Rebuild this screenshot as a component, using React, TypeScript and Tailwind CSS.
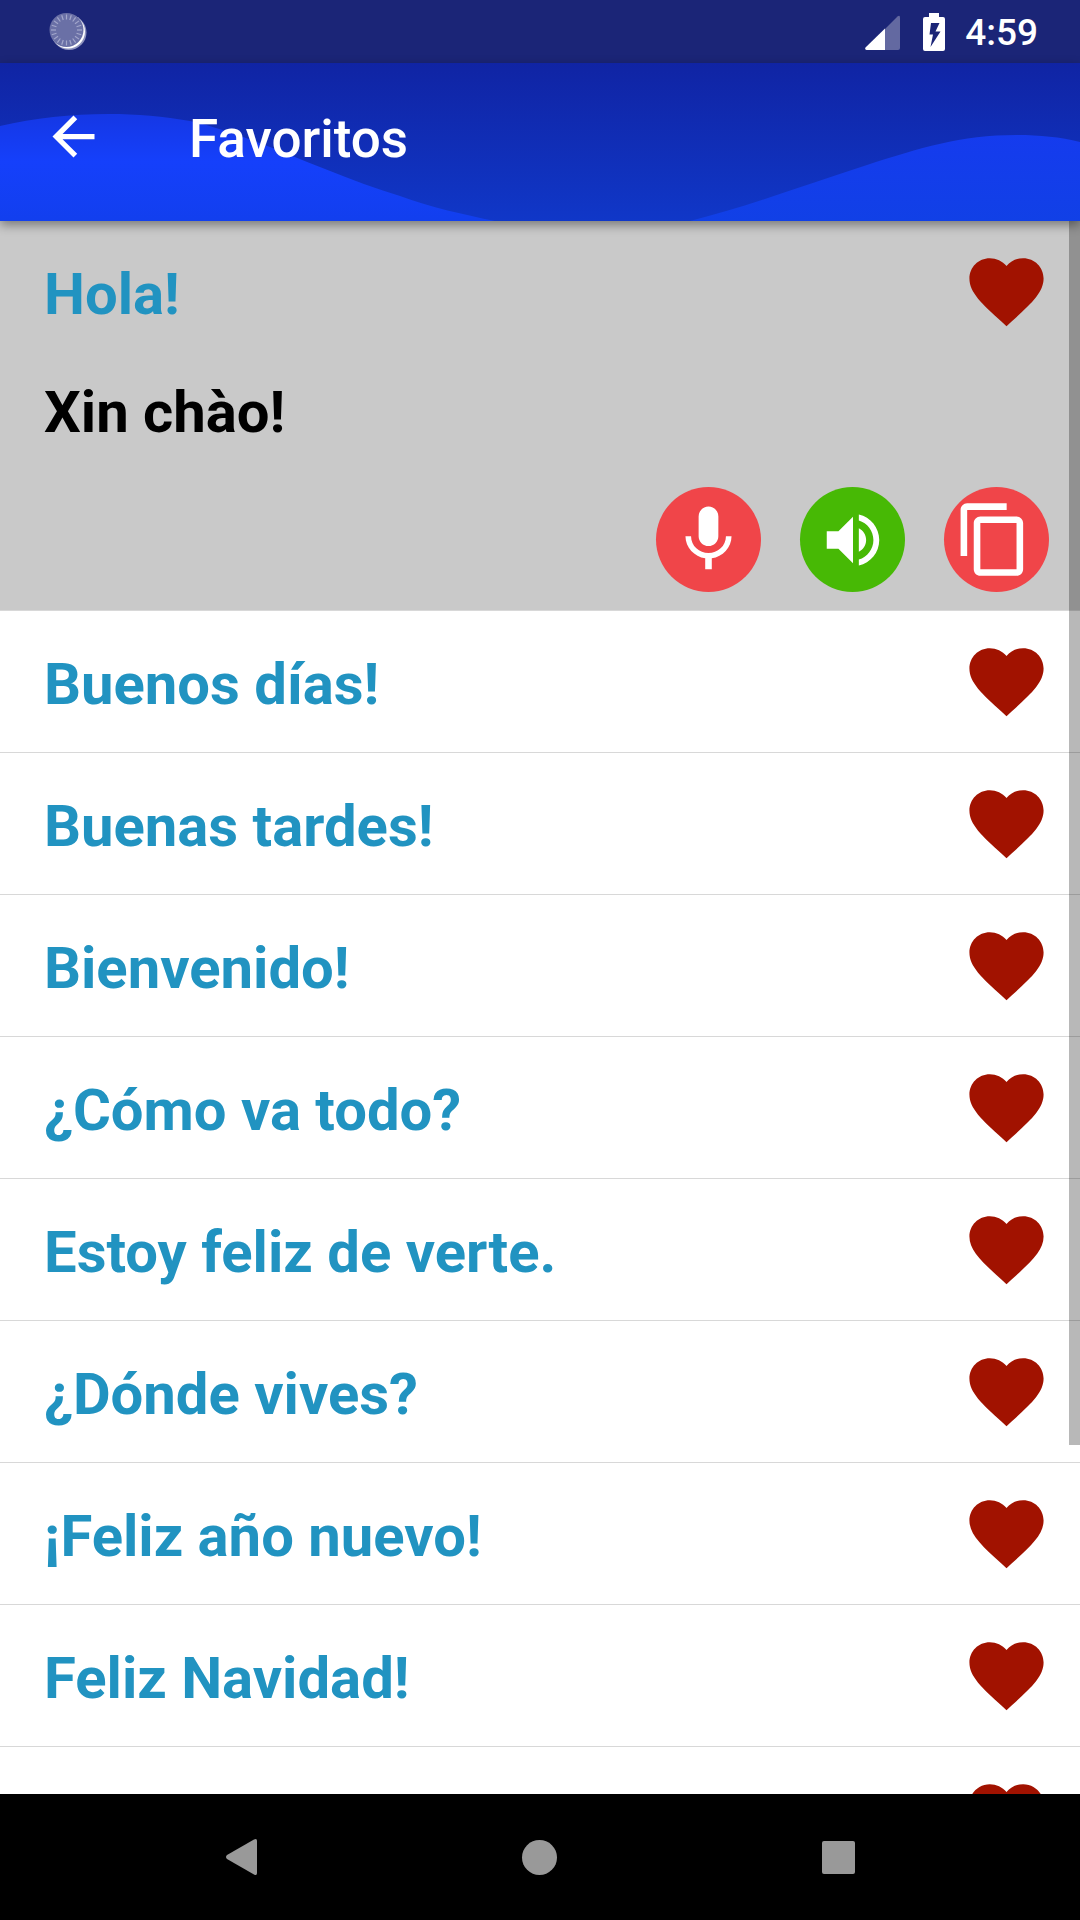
import React, { useState } from "react";

const phrases = [
  { id: 1, text: "Hola!", translation: "Xin chào!" },
  { id: 2, text: "Buenos días!", translation: "" },
  { id: 3, text: "Buenas tardes!", translation: "" },
  { id: 4, text: "Bienvenido!", translation: "" },
  { id: 5, text: "¿Cómo va todo?", translation: "" },
  { id: 6, text: "Estoy feliz de verte.", translation: "" },
  { id: 7, text: "¿Dónde vives?", translation: "" },
  { id: 8, text: "¡Feliz año nuevo!", translation: "" },
  { id: 9, text: "Feliz Navidad!", translation: "" },
  { id: 10, text: "", translation: "" },
];

const ticks = Array.from({ length: 20 }, (_, i) => i * 18);

function StatusBar() {
  return (
    <div className="flex h-[63px] shrink-0 items-center justify-between bg-[#1b2577] pl-[49px] pr-[42px]">
      <svg viewBox="0 0 38 38" className="size-[38px]">
        <circle cx="20" cy="19.500" r="17.500" fill="#8d92bd" />
        <circle cx="19" cy="18.500" r="17" fill="#fff" />
        <circle cx="17.500" cy="17" r="17" fill="#6a70a6" />
        {ticks.map((a) => (
          <path
            key={a}
            d="M17.500 1.500v5"
            stroke="#a3a7cb"
            strokeWidth="1.2"
            transform={`rotate(${a} 17.500 17)`}
          />
        ))}
      </svg>
      <div className="flex items-center">
        <svg viewBox="0 0 35 38" className="mr-[23px] h-[38px] w-[35px]">
          <path d="M20 16L32.500 3.500Q35 1.500 35 4.500V35Q35 37 33 37H20z" fill="#6369a1" />
          <path d="M20 15.500V37H1.500Q-.5 36.500 .5 34.500z" fill="#fff" />
        </svg>
        <svg viewBox="0 0 22 38" className="mr-[20px] h-[38px] w-[22px]">
          <path
            fill="#fff"
            fillRule="evenodd"
            d="M6 0h10v4h4q2 0 2 2v30q0 2-2 2H2q-2 0-2-2V6q0-2 2-2h4zM8 10L6.500 21.500H10L7.500 34L17.500 18.500H12.500L16.500 10z"
          />
        </svg>
        <span className="pt-[2px] text-[37px] leading-[44px] font-medium text-white">4:59</span>
      </div>
    </div>
  );
}

function Header() {
  return (
    <header className="relative z-10 h-[158px] shrink-0 bg-linear-to-b from-[#1024a4] to-[#1037c8] shadow-[0_4px_10px_rgba(0,0,0,0.4)]">
      <svg
        viewBox="0 0 1080 158"
        preserveAspectRatio="none"
        className="absolute inset-0 h-full w-full"
        aria-hidden="true"
      >
        <defs>
          <linearGradient id="waveLeft" x1="0" y1="50" x2="0" y2="158" gradientUnits="userSpaceOnUse">
            <stop offset="0" stopColor="#1537e4" />
            <stop offset="0.45" stopColor="#1540fb" />
            <stop offset="1" stopColor="#123fee" />
          </linearGradient>
          <linearGradient id="waveRight" x1="0" y1="70" x2="0" y2="158" gradientUnits="userSpaceOnUse">
            <stop offset="0" stopColor="#153bee" />
            <stop offset="1" stopColor="#1140e6" />
          </linearGradient>
        </defs>
        <path
          d="M0 63C60 49 130 47 190 58C250 71 330 112 400 133C430 144 465 152 495 158H0z"
          fill="url(#waveLeft)"
        />
        <path
          d="M690 158C750 143 810 120 867 102C920 85 960 72 1017 72C1040 72 1060 74 1080 79V158z"
          fill="url(#waveRight)"
        />
      </svg>
      <div className="relative flex h-[147px] items-center pl-[42px]">
        <button type="button" aria-label="Volver" className="mr-[84px]">
          <svg viewBox="0 0 24 24" className="size-[63px]" fill="#fff">
            <path d="M20 11H7.830l5.590-5.590L12 4l-8 8 8 8 1.410-1.410L7.830 13H20v-2z" />
          </svg>
        </button>
        <h1 className="pt-[5px] text-[53px] leading-[62px] font-medium text-white">Favoritos</h1>
      </div>
    </header>
  );
}

function Heart({ label }: { label: string }) {
  return (
    <button type="button" aria-label={`Quitar de favoritos ${label}`}>
      <svg viewBox="0 0 24 24" className="size-[89px]" fill="#a11200">
        <path d="M12 21.350l-1.450-1.320C5.400 15.360 2 12.280 2 8.500 2 5.420 4.420 3 7.500 3c1.740 0 3.410.81 4.500 2.090C13.090 3.810 14.760 3 16.500 3 19.580 3 22 5.420 22 8.500c0 3.780-3.400 6.860-8.550 11.540L12 21.350z" />
      </svg>
    </button>
  );
}

function Actions() {
  return (
    <div className="flex justify-end gap-[39px] pr-[31px] pb-[18px]">
      <button
        type="button"
        aria-label="Grabar"
        className="flex size-[105px] items-center justify-center rounded-full bg-[#f04549]"
      >
        <svg viewBox="0 0 24 24" className="size-[79px]" fill="#fff">
          <path d="M12 14c1.660 0 2.990-1.340 2.990-3L15 5c0-1.660-1.340-3-3-3S9 3.340 9 5v6c0 1.660 1.340 3 3 3zm5.300-3c0 3-2.540 5.100-5.300 5.100S6.700 14 6.700 11H5c0 3.410 2.720 6.230 6 6.720V21h2v-3.280c3.280-.48 6-3.300 6-6.720h-1.700z" />
        </svg>
      </button>
      <button
        type="button"
        aria-label="Escuchar"
        className="flex size-[105px] items-center justify-center rounded-full bg-[#47b905]"
      >
        <svg viewBox="0 0 24 24" className="size-[70px]" fill="#fff">
          <path d="M3 9v6h4l5 5V4L7 9H3zm13.500 3c0-1.770-1.020-3.290-2.500-4.030v8.050c1.480-.73 2.500-2.250 2.500-4.020zM14 3.230v2.060c2.890.86 5 3.540 5 6.710s-2.110 5.850-5 6.710v2.060c4.010-.91 7-4.490 7-8.770s-2.990-7.860-7-8.770z" />
        </svg>
      </button>
      <button
        type="button"
        aria-label="Copiar"
        className="flex size-[105px] items-center justify-center rounded-full bg-[#f04549] pr-[6px]"
      >
        <svg viewBox="0 0 24 24" className="size-[79px]" fill="#fff">
          <path d="M16 1H4c-1.100 0-2 .9-2 2v14h2V3h12V1zm3 4H8c-1.100 0-2 .9-2 2v14c0 1.100.9 2 2 2h11c1.100 0 2-.9 2-2V7c0-1.100-.9-2-2-2zm0 16H8V7h11v14z" />
        </svg>
      </button>
    </div>
  );
}

function NavBar() {
  return (
    <nav className="flex h-[126px] shrink-0 bg-black pl-[91px] pr-[92px]">
      <button type="button" aria-label="Atrás" className="flex flex-1 items-center justify-center">
        <svg viewBox="0 0 36 36" className="size-[36px]" fill="#999">
          <path d="M31 .6Q34 -1 34 2V34Q34 37 31 35.400L4 20Q2 18 4 16z" />
        </svg>
      </button>
      <button type="button" aria-label="Inicio" className="flex flex-1 items-center justify-center">
        <span className="size-[35px] rounded-full bg-[#999]" />
      </button>
      <button type="button" aria-label="Recientes" className="flex flex-1 items-center justify-center">
        <span className="size-[33px] rounded-[2px] bg-[#999]" />
      </button>
    </nav>
  );
}

export default function App() {
  const [open, setOpen] = useState(1);

  return (
    <div className="flex h-screen flex-col overflow-hidden bg-white font-[Roboto,sans-serif]">
      <StatusBar />
      <Header />
      <main className="relative min-h-0 flex-1 overflow-hidden">
        <ul>
          {phrases.map((p) => (
            <li
              key={p.id}
              className={
                open === p.id
                  ? "border-b border-[#d8d8d8] bg-[#c9c9c9]"
                  : "border-b border-[#d8d8d8] bg-white"
              }
            >
              <div className="flex h-[141px] items-center justify-between pl-[44px] pr-[29px]">
                <button
                  type="button"
                  onClick={() => setOpen(p.id)}
                  className="flex-1 pt-[5px] text-left text-[58px] leading-[68px] font-bold text-[#2193c1]"
                >
                  {p.text}
                </button>
                <Heart label={p.text} />
              </div>
              {open === p.id && p.translation && (
                <>
                  <p className="mb-[41px] h-[84px] pl-[44px] pt-[16px] text-[58px] leading-[68px] font-bold text-black">
                    {p.translation}
                  </p>
                  <Actions />
                </>
              )}
            </li>
          ))}
        </ul>
        {/* scroll thumb */}
        <div className="absolute top-0 right-0 h-[1224px] w-[11px] bg-black/28" />
      </main>
      <NavBar />
    </div>
  );
}
